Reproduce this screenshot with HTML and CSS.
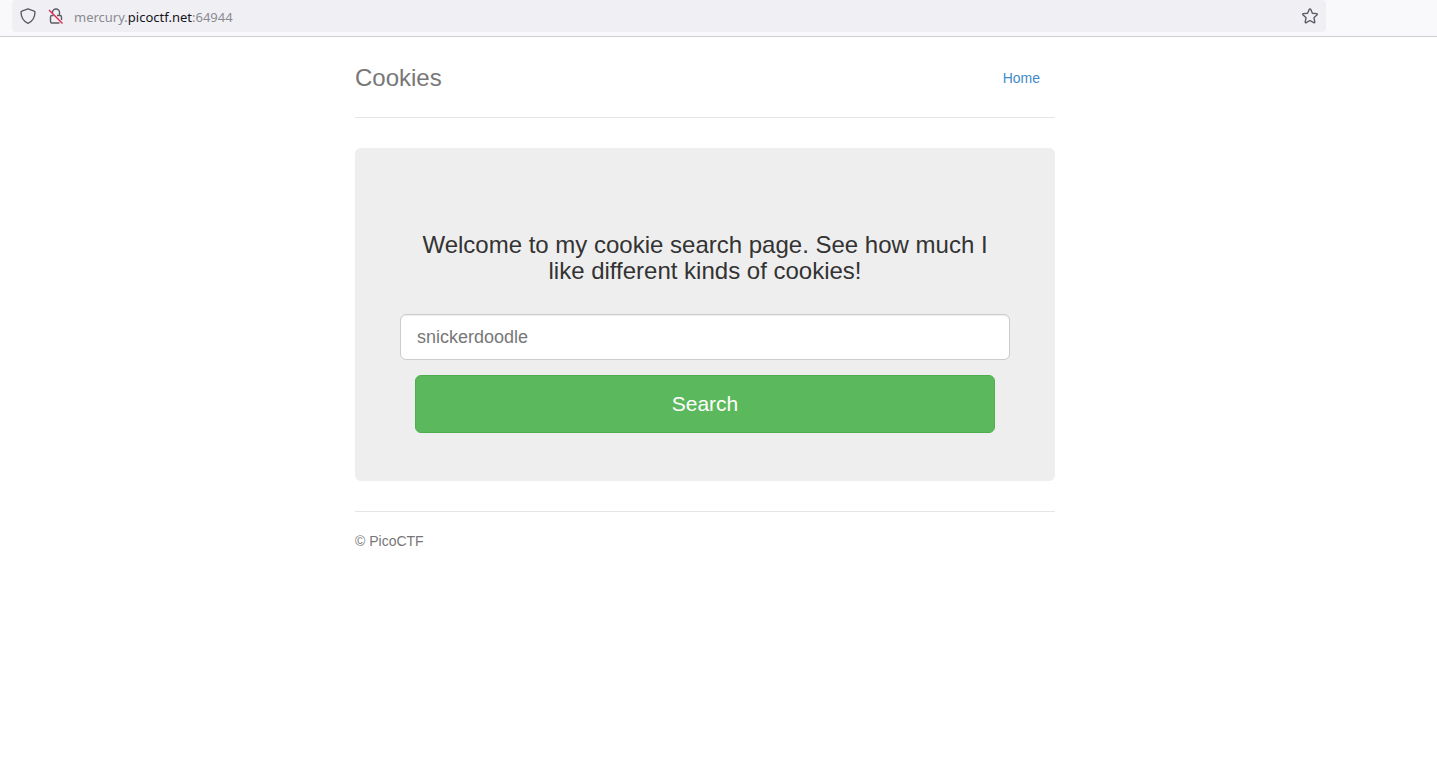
FILE: index.html
```html
<!DOCTYPE html>
<html lang="en">
<head>
<meta charset="utf-8">
<title>Cookies</title>
<link rel="stylesheet" href="styles.css">
</head>
<body>
<div class="toolbar">
  <div class="urlbar">
    <button class="icon-button" type="button" aria-label="Tracking protection">
      <svg class="icon" viewBox="0 0 16 16"><path d="M8 .8 14.2 3.1c.5.2.8.6.8 1.1C14.8 9.600 12.600 13.300 8 15.300 3.400 13.300 1.200 9.600 1 4.200c0-.5.3-.9.8-1.100z"/></svg>
    </button>
    <button class="icon-button" type="button" aria-label="Connection not secure">
      <svg class="icon" viewBox="0 0 16 16"><path d="M4.500 5V4.500a3.500 3.500 0 0 1 7 0v3M9 7.500H12a1.500 1.500 0 0 1 1.500 1.500v3M11.500 15H4a1.500 1.500 0 0 1-1.500-1.500V9A1.500 1.500 0 0 1 4 7.500h1.500"/><path class="slash" d="m1 2 13.500 13.500"/></svg>
    </button>
    <div class="address">mercury.<span class="domain">picoctf.net</span>:64944</div>
    <button class="icon-button" type="button" aria-label="Bookmark this page">
      <svg class="icon" viewBox="0 0 16 16"><path d="M7.300 1.300a.8.8 0 0 1 1.400 0l1.700 3.900 4.200.4c.7.1.9.8.5 1.200l-3.200 2.900.9 4.200c.1.700-.5 1.100-1.100.8L8 12.500l-3.700 2.200c-.6.3-1.200-.1-1.100-.8l.9-4.200L.9 6.800c-.4-.4-.2-1.100.5-1.200l4.200-.4z"/></svg>
    </button>
  </div>
</div>
<div class="viewport">
  <div class="container">
    <header class="header">
      <h3 class="brand">Cookies</h3>
      <nav><a class="nav-link" href="#">Home</a></nav>
    </header>
    <main class="jumbotron">
      <h1 class="welcome"><label for="name">Welcome to my cookie search page. See how much I like different kinds of cookies!</label></h1>
      <form class="search-form">
        <input class="search-input" type="text" id="name" placeholder="snickerdoodle">
        <button class="search-button" type="button">Search</button>
      </form>
    </main>
    <footer class="footer">© PicoCTF</footer>
  </div>
</div>
</body>
</html>
```

FILE: styles.css
```css
* {
  box-sizing: border-box;
}

body {
  margin: 0;
  background: #fff;
  color: #333;
  font: 14px/20px "Liberation Sans", Arial, sans-serif;
}

.toolbar {
  padding: 0 111px 4px 12px;
  background: #f9f9fb;
  border-bottom: 1px solid #ccc;
}

.urlbar {
  display: flex;
  align-items: center;
  height: 32px;
  padding: 0 2px;
  background: #f0f0f4;
  border-radius: 4px;
}

.icon-button {
  display: flex;
  padding: 0 6px;
  border: 0;
  background: none;
}

.icon {
  width: 16px;
  height: 16px;
  fill: none;
  stroke: #5b5b66;
  stroke-width: 1.4;
  stroke-linejoin: round;
}

.slash {
  stroke: #e22850;
}

.address {
  flex: 1;
  padding: 2px 4px 0;
  color: #8a8a90;
  font: 13px/20px "Noto Sans", sans-serif;
}

.domain {
  color: #15141a;
}

.viewport {
  padding: 21px 27px 20px 0;
}

.container {
  max-width: 700px;
  margin: 0 auto;
}

.header {
  display: flex;
  align-items: center;
  justify-content: space-between;
  padding-bottom: 19px;
  border-bottom: 1px solid #e5e5e5;
  margin-bottom: 30px;
}

.brand {
  margin: 0;
  color: #777;
  font-size: 24px;
  font-weight: 400;
  line-height: 40px;
}

.nav-link {
  display: block;
  padding: 10px 15px;
  color: #428bca;
  text-decoration: none;
}

.jumbotron {
  padding: 84px 45px 48px;
  margin-bottom: 30px;
  background: #eee;
  border-radius: 6px;
  text-align: center;
}

.welcome {
  padding: 0 15px;
  margin: 0 0 30px;
  font-size: 24px;
  font-weight: 400;
  line-height: 26px;
}

.search-form {
  display: flex;
  flex-direction: column;
  gap: 15px;
}

.search-input {
  width: 100%;
  height: 46px;
  padding: 10px 16px;
  border: 1px solid #ccc;
  border-radius: 6px;
  background: #fff;
  box-shadow: inset 0 1px 1px rgba(0, 0, 0, 0.075);
  color: #555;
  font: 18px/24px "Liberation Sans", Arial, sans-serif;
}

.search-input::placeholder {
  color: #777;
  opacity: 1;
}

.search-button {
  padding: 14px 24px;
  margin: 0 15px;
  border: 1px solid #4cae4c;
  border-radius: 6px;
  background: #5cb85c;
  color: #fff;
  font: 21px/28px "Liberation Sans", Arial, sans-serif;
}

.footer {
  padding-top: 19px;
  border-top: 1px solid #e5e5e5;
  color: #777;
}
```
